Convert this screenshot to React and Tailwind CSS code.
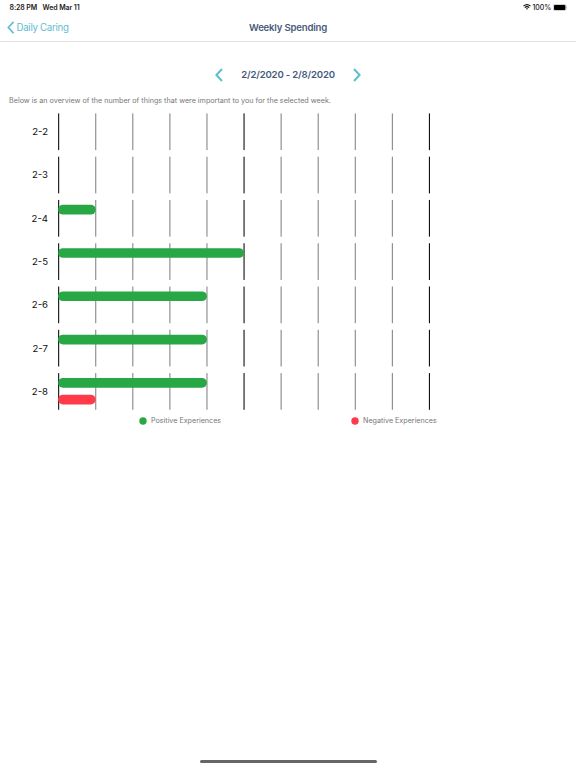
const days = [
  { label: '2-2', positive: 0, negative: 0 },
  { label: '2-3', positive: 0, negative: 0 },
  { label: '2-4', positive: 1, negative: 0 },
  { label: '2-5', positive: 5, negative: 0 },
  { label: '2-6', positive: 4, negative: 0 },
  { label: '2-7', positive: 4, negative: 0 },
  { label: '2-8', positive: 4, negative: 1 },
];
const ticks = [0, 1, 2, 3, 4, 5, 6, 7, 8, 9, 10];
const UNIT = 37.08;
const ROW = 43.28;

function Chevron({ className, right = false, stroke = 2 }) {
  return (
    <svg className={className} viewBox="0 0 8 14" fill="none" stroke="#60bdcf" strokeWidth={stroke}>
      <path d={right ? 'M1 1L6.6 7L1 13' : 'M7 1L1.4 7L7 13'} />
    </svg>
  );
}

function StatusBar() {
  return (
    <div className="flex h-[14px] items-center justify-between whitespace-nowrap pl-[9.5px] pr-[8px] text-[7px] font-semibold leading-[14px] text-[#222]">
      <div className="flex gap-[5.5px] pt-px">
        <span className="tracking-[-0.1px]">8:28 PM</span>
        <span className="tracking-[-0.1px]">Wed Mar 11</span>
      </div>
      <div className="flex items-center font-medium">
        <svg className="mr-[2px] h-[6px] w-[8px]" viewBox="0 0 16 12" fill="none" stroke="#111" strokeWidth="2.2">
          <path d="M1 4.3Q8-2 15 4.3M3.6 7.3Q8 3.4 12.4 7.3" />
          <path d="M8 11.5L5.7 9.2Q8 7.4 10.3 9.2Z" fill="#111" stroke="none" />
        </svg>
        <span className="pt-px tracking-[-0.1px]">100%</span>
        <svg className="ml-[2px] h-[7px] w-[15px]" viewBox="0 0 15 7">
          <rect x=".3" y=".4" width="12.8" height="6.2" rx="1.7" fill="white" stroke="#999" strokeWidth=".5" />
          <rect x="1" y="1.1" width="11.4" height="4.8" rx="1" fill="black" />
          <path d="M13.7 2.4Q14.7 3.5 13.7 4.6Z" fill="#888" />
        </svg>
      </div>
    </div>
  );
}

function Chart() {
  return (
    <main className="mt-[6px] flex h-[297px]">
      <div className="flex w-[58px] flex-col gap-[6.28px] pr-[10px] pt-[0.2px] text-right text-[9.6px] leading-[37px] text-[#111]">
        {days.map((day) => (
          <div key={day.label} className="h-[37px]">{day.label}</div>
        ))}
      </div>
      <svg className="h-[297px] w-[373px]" viewBox="0 0 373 297">
        {days.map((day, i) => (
          <g key={day.label} transform={`translate(0.1 ${0.4 + i * ROW})`}>
            {ticks.map((t) => (
              <rect key={t} x={t * UNIT} width="1.1" height="36.7" fill={t % 5 === 0 ? '#111' : '#888'} />
            ))}
            {day.positive > 0 && <rect x="0" y="4.9" width={day.positive * UNIT + 0.5} height="9.7" rx="4.85" fill="#28a745" />}
            {day.negative > 0 && <rect x="0" y="21.6" width={day.negative * UNIT + 0.5} height="9.7" rx="4.85" fill="#ff3b4a" />}
          </g>
        ))}
      </svg>
    </main>
  );
}

function LegendDot({ color }) {
  return (
    <svg className="h-[8px] w-[8px]" viewBox="0 0 8 8">
      <circle cx="4" cy="4" r="3.7" fill={color} />
    </svg>
  );
}

export default function App() {
  return (
    <div className="flex h-[768px] w-[576px] flex-col overflow-hidden bg-white font-['Inter',sans-serif]">
      <StatusBar />
      <header className="flex h-[28px] items-center border-b border-[#e2e2e2]">
        <div className="flex w-[192px] items-center pl-[7px] text-[9.7px] text-[#60bdcf]">
          <Chevron className="mr-[2px] h-[13px] w-[7.5px]" stroke={1.8} />
          <span className="whitespace-nowrap pt-[2px] tracking-[-0.3px]">Daily Caring</span>
        </div>
        <div className="w-[192px] pt-[2px] text-center text-[9.6px] font-semibold tracking-[-0.2px] text-[#475b7b]">Weekly Spending</div>
      </header>
      <div className="mt-[25px] flex h-[16px] items-center justify-center">
        <Chevron className="h-[14px] w-[8px]" />
        <div className="w-[130px] whitespace-nowrap pt-px text-center text-[9.6px] font-semibold tracking-[-0.18px] text-[#475b7b]">2/2/2020 - 2/8/2020</div>
        <Chevron className="h-[14px] w-[8px]" right />
      </div>
      <p className="mt-[12px] h-[12px] whitespace-nowrap pl-[9px] text-[7.2px] leading-[12px] text-[#777]">
        Below is an overview of the number of things that were important to you for the selected week.
      </p>
      <Chart />
      <div className="mt-[5px] flex h-[12px] items-center pl-[138.5px] text-[7.2px] leading-[12px] tracking-[-0.02px] text-[#777]">
        <div className="flex w-[212px] items-center gap-[4.5px]">
          <LegendDot color="#28a745" />
          <span>Positive Experiences</span>
        </div>
        <div className="flex items-center gap-[4.5px]">
          <LegendDot color="#ff3b4a" />
          <span>Negative Experiences</span>
        </div>
      </div>
      <div className="mx-auto mb-[5px] mt-auto h-[3px] w-[177px] rounded-full bg-[#666]" />
    </div>
  );
}
